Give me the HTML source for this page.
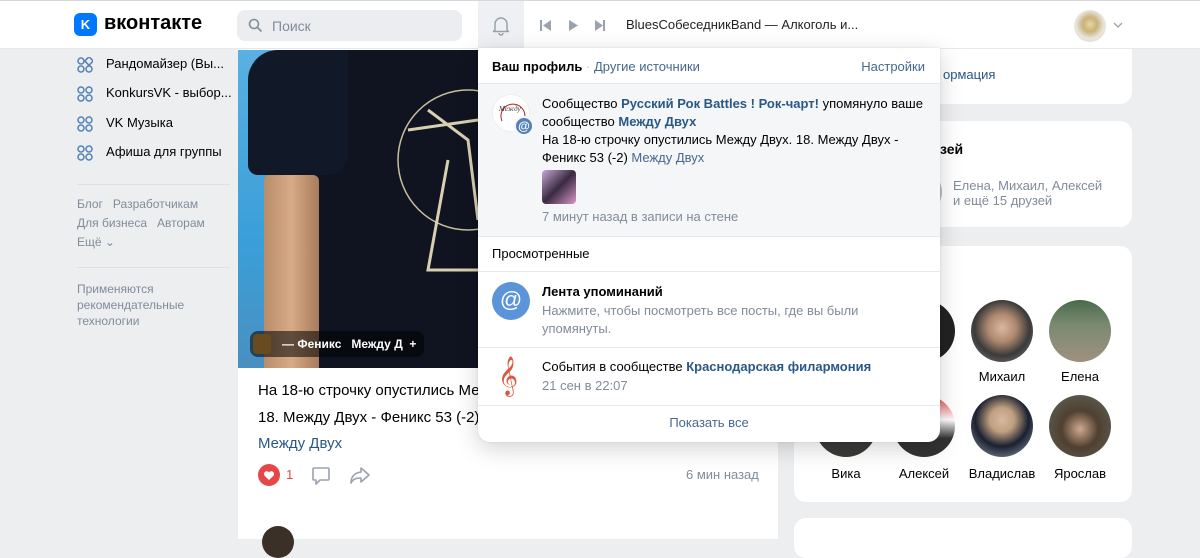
<!DOCTYPE html>
<html><head><meta charset="utf-8"><style>
*{box-sizing:border-box;margin:0;padding:0}
body{width:1200px;height:533px;overflow:hidden;background:#edeef0;font-family:"Liberation Sans","Noto Sans CJK SC",sans-serif;font-size:13px;color:#000;position:relative}
.a{position:absolute}
.blue{color:#2a5885}
.b{font-weight:bold}
.g{color:#818c99}
.card{position:absolute;background:#fff;border-radius:12px}
.hd{position:absolute;left:0;top:0;width:1200px;height:49px;background:#fff;border-top:1px solid #d7d8db;border-bottom:1px solid #e7e8ec;z-index:5}
.mi{position:absolute;left:77px;font-size:13px;color:#000}
.mi i{position:absolute;left:0;top:1px;width:16px;height:16px}
.mi span{position:absolute;left:29px;top:0;white-space:nowrap}
.fr{position:absolute;width:62px;height:62px;border-radius:50%}
.fn{position:absolute;width:90px;text-align:center;font-size:13px}
.dd{position:absolute;left:478px;top:48px;width:462px;height:394px;background:#fff;border-radius:0 0 12px 12px;box-shadow:0 6px 24px rgba(0,0,0,.18),0 0 2px rgba(0,0,0,.1);overflow:hidden;z-index:6}
.dd .l{position:absolute;left:0;width:462px;height:1px;background:#e7e8ec}
</style></head><body>
<div class="hd">
 <div class="a" style="left:74px;top:12px;width:23px;height:23px;background:#0077ff;border-radius:6px;color:#fff;font-weight:bold;font-size:13px;text-align:center;line-height:23px">K</div>
 <div class="a b" style="left:104px;top:11px;font-size:20px;color:#000">вконтакте</div>
 <div class="a" style="left:237px;top:9px;width:225px;height:31px;background:#ebedf0;border-radius:8px">
  <svg class="a" style="left:11px;top:8px" width="15" height="15" viewBox="0 0 15 15"><circle cx="6" cy="6" r="4.5" fill="none" stroke="#818c99" stroke-width="1.6"/><path d="M9.5 9.5l4 4" stroke="#818c99" stroke-width="1.6"/></svg>
  <span class="a g" style="left:35px;top:8px;font-size:14px">Поиск</span>
 </div>
 <div class="a" style="left:478px;top:0;width:46px;height:48px;background:#eef0f3"></div>
 <svg class="a" style="left:490px;top:13px" width="22" height="22" viewBox="0 0 22 22"><path d="M5 16V10a6 6 0 0 1 12 0v6l1.5 1.5H3.5z M9 19a2 2 0 0 0 4 0" fill="none" stroke="#99a2ad" stroke-width="1.5" stroke-linejoin="round"/></svg>
 <svg class="a" style="left:538px;top:18px" width="80" height="14" viewBox="0 0 80 14"><rect x="2" y="1" width="2" height="11" fill="#99a2ad"/><path d="M13 1v11L5 6.5z" fill="#99a2ad"/><path d="M31 1v11l9-5.5z" fill="#99a2ad"/><path d="M57 1v11l8-5.5z" fill="#99a2ad"/><rect x="65" y="1" width="2" height="11" fill="#99a2ad"/></svg>
 <div class="a" style="left:626px;top:16px;font-size:13px;color:#222">BluesСобеседникBand — Алкоголь и...</div>
 <div class="a" style="left:1074px;top:9px;width:32px;height:32px;border-radius:50%;background:radial-gradient(circle at 50% 45%,#e8d6a0 0,#c9b27a 30%,#e9e6df 60%,#d8d4cc 100%)"></div>
 <svg class="a" style="left:1113px;top:21px" width="10" height="6"><path d="M1 1l4 4 4-4" fill="none" stroke="#99a2ad" stroke-width="1.3"/></svg>
</div>

<!-- left menu -->
<div class="mi" style="top:56px"><i><svg width="16" height="16"><circle cx="4" cy="4" r="3" fill="none" stroke="#5181b8" stroke-width="1.5"/><rect x="9" y="1" width="6" height="6" rx="1" transform="rotate(45 12 4)" fill="none" stroke="#5181b8" stroke-width="1.5"/><circle cx="4" cy="12" r="3" fill="none" stroke="#5181b8" stroke-width="1.5"/><circle cx="12" cy="12" r="3" fill="none" stroke="#5181b8" stroke-width="1.5"/></svg></i><span>Рандомайзер (Вы...</span></div>
<div class="mi" style="top:85px"><i><svg width="16" height="16"><circle cx="4" cy="4" r="3" fill="none" stroke="#5181b8" stroke-width="1.5"/><circle cx="12" cy="4" r="3" fill="none" stroke="#5181b8" stroke-width="1.5"/><circle cx="4" cy="12" r="3" fill="none" stroke="#5181b8" stroke-width="1.5"/><circle cx="12" cy="12" r="3" fill="none" stroke="#5181b8" stroke-width="1.5"/></svg></i><span>KonkursVK - выбор...</span></div>
<div class="mi" style="top:115px"><i><svg width="16" height="16"><circle cx="4" cy="4" r="3" fill="none" stroke="#5181b8" stroke-width="1.5"/><circle cx="12" cy="4" r="3" fill="none" stroke="#5181b8" stroke-width="1.5"/><circle cx="4" cy="12" r="3" fill="none" stroke="#5181b8" stroke-width="1.5"/><circle cx="12" cy="12" r="3" fill="none" stroke="#5181b8" stroke-width="1.5"/></svg></i><span>VK Музыка</span></div>
<div class="mi" style="top:144px"><i><svg width="16" height="16"><circle cx="4" cy="4" r="3" fill="none" stroke="#5181b8" stroke-width="1.5"/><circle cx="12" cy="4" r="3" fill="none" stroke="#5181b8" stroke-width="1.5"/><circle cx="4" cy="12" r="3" fill="none" stroke="#5181b8" stroke-width="1.5"/><circle cx="12" cy="12" r="3" fill="none" stroke="#5181b8" stroke-width="1.5"/></svg></i><span>Афиша для группы</span></div>
<div class="a" style="left:77px;top:184px;width:153px;height:1px;background:#dce1e6"></div>
<div class="a g" style="left:77px;top:195px;font-size:12px;line-height:19px">Блог&nbsp;&nbsp;&nbsp;Разработчикам<br>Для бизнеса&nbsp;&nbsp;&nbsp;Авторам<br>Ещё ⌄</div>
<div class="a" style="left:77px;top:267px;width:153px;height:1px;background:#dce1e6"></div>
<div class="a g" style="left:77px;top:281px;font-size:12px;line-height:16px">Применяются<br>рекомендательные<br>технологии</div>

<!-- post -->
<div class="a" style="left:238px;top:49px;width:540px;height:490px;background:#fff"></div>
<div class="a" style="left:238px;top:50px;width:240px;height:318px;background:#0f1420;overflow:hidden">
 <div class="a" style="left:0;top:0;width:48px;height:318px;background:linear-gradient(#5ab0e0,#3a9fd8 60%,#4a8fc0)"></div>
 <div class="a" style="left:10px;top:0;width:100px;height:125px;background:#111827;border-radius:30px 0 20px 10px"></div>
 <div class="a" style="left:26px;top:125px;width:55px;height:193px;background:linear-gradient(90deg,#b88d6a,#d8aa85,#a77c5c);border-radius:6px 6px 0 0"></div>
 <svg class="a" style="left:150px;top:20px" width="90" height="220"><circle cx="80" cy="90" r="70" fill="none" stroke="#c8c0a0" stroke-width="1.5"/><path d="M20 60l70 -10M40 40l40 30 10 80M60 90l-20 110 50 0" fill="none" stroke="#d8d0b0" stroke-width="3"/></svg>
 <div class="a" style="left:12px;top:281px;width:174px;height:26px;background:rgba(0,0,0,.55);border-radius:8px"></div>
 <div class="a" style="left:15px;top:284px;width:18px;height:20px;background:#6a4a20;border-radius:4px"></div>
 <div class="a b" style="left:44px;top:287px;color:#fff;font-size:12px">— Феникс&nbsp;&nbsp;&nbsp;Между Д&nbsp;&nbsp;+</div>
</div>
<div class="a" style="left:258px;top:377px;font-size:15px;line-height:27px">На 18-ю строчку опустились Межд<br>18. Между Двух - Феникс 53 (-2)</div>
<div class="a blue" style="left:258px;top:435px;font-size:15px">Между Двух</div>
<svg class="a" style="left:258px;top:464px" width="22" height="22"><circle cx="11" cy="11" r="11" fill="#e64646"/><path d="M11 16l-4.5-4.3a2.6 2.6 0 0 1 4.5-3.3 2.6 2.6 0 0 1 4.5 3.3z" fill="#fff"/></svg>
<div class="a" style="left:286px;top:467px;color:#e64646;font-size:13px">1</div>
<svg class="a" style="left:310px;top:464px" width="22" height="22"><path d="M4 4h14a1 1 0 0 1 1 1v10a1 1 0 0 1-1 1h-8l-4 4v-4H4a1 1 0 0 1-1-1V5a1 1 0 0 1 1-1z" fill="none" stroke="#99a2ad" stroke-width="1.6" stroke-linejoin="round"/></svg>
<svg class="a" style="left:348px;top:464px" width="24" height="22"><path d="M13 4l8 7-8 7v-4c-5 0-8 1-10 5 0-6 3-10 10-11z" fill="none" stroke="#99a2ad" stroke-width="1.6" stroke-linejoin="round"/></svg>
<div class="a g" style="left:686px;top:467px;font-size:13px">6 мин назад</div>
<div class="a" style="left:262px;top:526px;width:32px;height:32px;border-radius:50%;background:#3a3028"></div>

<!-- right -->
<div class="card" style="left:794px;top:30px;width:338px;height:74px"></div>
<div class="a" style="left:943px;top:67px;color:#2a5885;font-size:13px">ормация</div>
<div class="card" style="left:794px;top:121px;width:338px;height:106px"></div>
<div class="a b" style="left:940px;top:141px;font-size:14px">зей</div>
<div class="a" style="left:920px;top:176px;width:22px;height:32px;border-radius:50%;background:#b8bcc4"></div>
<div class="a g" style="left:953px;top:178px;font-size:13px;line-height:15px">Елена, Михаил, Алексей<br>и ещё 15 друзей</div>
<div class="card" style="left:794px;top:246px;width:338px;height:256px"></div>
<div class="fr" style="left:893px;top:300px;background:#222"></div>
<div class="fr" style="left:971px;top:300px;background:radial-gradient(circle at 50% 45%,#d9b8a0 0,#b08a70 30%,#3a3a3a 60%,#888 100%)"></div>
<div class="fr" style="left:1049px;top:300px;background:linear-gradient(#4a6a4a,#7a8a70 40%,#a09080)"></div>
<div class="fn" style="left:890px;top:369px">й</div>
<div class="fn" style="left:957px;top:369px">Михаил</div>
<div class="fn" style="left:1035px;top:369px">Елена</div>
<div class="fr" style="left:815px;top:395px;background:#3a3a38"></div>
<div class="fr" style="left:893px;top:395px;background:linear-gradient(#d84040,#fff 40%,#333 70%)"></div>
<div class="fr" style="left:971px;top:395px;background:radial-gradient(circle at 50% 40%,#d8b8a0 0,#c0a080 25%,#1a2030 55%,#a0a8b0 100%)"></div>
<div class="fr" style="left:1049px;top:395px;background:radial-gradient(circle at 50% 55%,#d0a890 0,#504030 40%,#606860 100%)"></div>
<div class="fn" style="left:801px;top:466px">Вика</div>
<div class="fn" style="left:879px;top:466px">Алексей</div>
<div class="fn" style="left:957px;top:466px">Владислав</div>
<div class="fn" style="left:1035px;top:466px">Ярослав</div>
<div class="card" style="left:794px;top:518px;width:338px;height:40px"></div>

<!-- dropdown -->
<div class="dd">
 <div class="a b" style="left:14px;top:11px">Ваш профиль <span style="color:#c0c4cc;font-weight:normal">·</span> <span class="blue" style="font-weight:normal;color:#45688e">Другие источники</span></div>
 <div class="a" style="right:15px;top:11px;color:#45688e">Настройки</div>
 <div class="l" style="top:35px"></div>
 <div class="a" style="left:0;top:36px;width:462px;height:152px;background:#f5f6f8"></div>
 <div class="a" style="left:14px;top:46px;width:38px;height:38px;border-radius:50%;background:#fff;border:1px solid #eee"><svg width="38" height="38"><path d="M9 26a12 12 0 1 1 20 3" fill="none" stroke="#b02020" stroke-width="1"/><text x="6" y="16" font-size="7" font-style="italic" fill="#333" font-family="Liberation Serif,serif">Между</text></svg></div>
 <div class="a" style="left:36px;top:68px;width:20px;height:20px;border-radius:50%;background:#5181b8;border:2px solid #f5f6f8;color:#fff;font-size:12px;text-align:center;line-height:16px;font-weight:bold">@</div>
 <div class="a" style="left:64px;top:47px;width:385px;line-height:18px;font-size:13px">Сообщество <b class="blue">Русский Рок Battles ! Рок-чарт!</b> упомянуло ваше сообщество <b class="blue">Между Двух</b><br>На 18-ю строчку опустились Между Двух. 18. Между Двух - Феникс 53 (-2) <span style="color:#45688e">Между Двух</span></div>
 <div class="a" style="left:64px;top:122px;width:34px;height:34px;border-radius:4px;background:linear-gradient(135deg,#c8a8d8,#3a2a40 50%,#d898c8)"></div>
 <div class="a g" style="left:64px;top:161px">7 минут назад в записи на стене</div>
 <div class="l" style="top:188px"></div>
 <div class="a" style="left:14px;top:198px">Просмотренные</div>
 <div class="l" style="top:223px"></div>
 <div class="a" style="left:14px;top:234px;width:38px;height:38px;border-radius:50%;background:#5b94d8;color:#fff;font-size:22px;text-align:center;line-height:36px">@</div>
 <div class="a b" style="left:64px;top:236px">Лента упоминаний</div>
 <div class="a g" style="left:64px;top:254px;line-height:18px">Нажмите, чтобы посмотреть все посты, где вы были<br>упомянуты.</div>
 <div class="l" style="top:299px"></div>
 <div class="a" style="left:20px;top:308px;color:#d85a40;font-size:34px;line-height:40px;font-family:'DejaVu Sans',sans-serif">𝄞</div>
 <div class="a" style="left:64px;top:311px">События в сообществе <b class="blue">Краснодарская филармония</b></div>
 <div class="a g" style="left:64px;top:330px">21 сен в 22:07</div>
 <div class="l" style="top:357px"></div>
 <div class="a" style="left:0;width:462px;top:367px;text-align:center;color:#45688e">Показать все</div>
</div>
</body></html>
